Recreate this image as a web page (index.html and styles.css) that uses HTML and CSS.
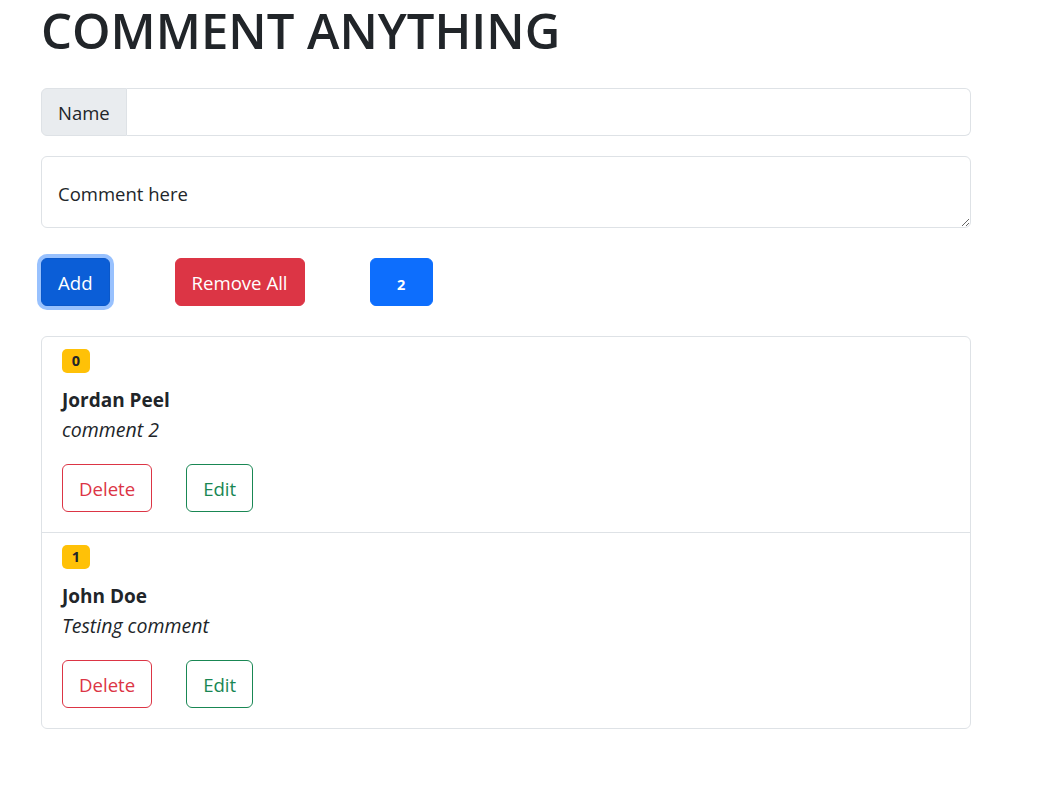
FILE: index.html
```html
<!DOCTYPE html>
<html lang="en">
<head>
<meta charset="utf-8">
<title>Comment Anything</title>
<link rel="stylesheet" href="styles.css">
</head>
<body>
<div class="container">
  <h1 class="title">COMMENT ANYTHING</h1>
  <div class="input-group">
    <span class="input-group-text">Name</span>
    <input class="form-control" type="text">
  </div>
  <textarea class="form-control textarea" placeholder="Comment here"></textarea>
  <div class="actions">
    <button class="btn btn-primary focused">Add</button>
    <button class="btn btn-danger">Remove All</button>
    <button class="btn btn-primary"><span class="badge badge-count">2</span></button>
  </div>
  <ul class="list">
    <li class="item">
      <span class="badge badge-warning">0</span>
      <div class="name">Jordan Peel</div>
      <div class="comment">comment 2</div>
      <div class="item-actions">
        <button class="btn btn-outline-danger">Delete</button>
        <button class="btn btn-outline-success">Edit</button>
      </div>
    </li>
    <li class="item">
      <span class="badge badge-warning">1</span>
      <div class="name">John Doe</div>
      <div class="comment">Testing comment</div>
      <div class="item-actions">
        <button class="btn btn-outline-danger">Delete</button>
        <button class="btn btn-outline-success">Edit</button>
      </div>
    </li>
  </ul>
</div>
</body>
</html>
```

FILE: styles.css
```css
* { box-sizing: border-box; }
body {
  margin: 0;
  font-family: "Open Sans", "Noto Sans", sans-serif;
  color: #212529;
  background: #fff;
}
.container {
  width: 930px;
  margin-left: 41px;
}
.title {
  margin: 0 0 28px 0;
  padding-top: 1px;
  font-size: 49px;
  font-weight: 600;
  line-height: 59px;
  letter-spacing: 0;
}
.input-group {
  display: flex;
  height: 48px;
}
.input-group-text {
  display: flex;
  align-items: center;
  padding: 0 16px;
  font-size: 18.5px;
  background: #e9ecef;
  border: 1px solid #dee2e6;
  border-radius: 6px 0 0 6px;
}
.form-control {
  flex: 1;
  font-family: inherit;
  font-size: 18.5px;
  color: #212529;
  border: 1px solid #dee2e6;
  border-left: 0;
  border-radius: 0 6px 6px 0;
  padding: 0 16px;
  outline: none;
}
.textarea {
  display: block;
  width: 100%;
  height: 72px;
  margin-top: 20px;
  border-left: 1px solid #dee2e6;
  border-radius: 6px;
  padding: 23px 16px 0;
  resize: vertical;
  line-height: 27px;
}
.textarea::placeholder { color: #212529; opacity: 1; }
.actions {
  display: flex;
  gap: 65px;
  margin-top: 30px;
}
.btn {
  height: 48px;
  padding: 0 16px;
  font-family: inherit;
  font-size: 18.6px;
  border-radius: 6px;
  border: 1px solid transparent;
  cursor: pointer;
  color: #fff;
}
.btn-primary { background: #0d6efd; border-color: #0d6efd; }
.btn-primary.focused {
  background: #0b5ed7;
  border-color: #0a58ca;
  box-shadow: 0 0 0 4px rgba(49, 132, 253, 0.5);
}
.btn-danger { background: #dc3545; border-color: #dc3545; }
.btn-outline-danger { background: #fff; color: #dc3545; border-color: #dc3545; }
.btn-outline-success { background: #fff; color: #198754; border-color: #198754; }
.badge {
  display: inline-block;
  font-weight: 700;
  font-size: 14.5px;
  line-height: 1;
  border-radius: 5px;
}
.badge-count {
  padding: 0 10px;
  color: #fff;
  width: 29px;
  text-align: center;
}
.badge-warning {
  background: #ffc107;
  color: #212529;
  padding: 5px 0;
  width: 28px;
  text-align: center;
  height: 24px;
}
.list {
  list-style: none;
  margin: 30px 0 0;
  padding: 0;
  border: 1px solid #dee2e6;
  border-radius: 6px;
}
.item {
  padding: 12px 20px 20px;
  border-top: 1px solid #dee2e6;
}
.item:first-child { border-top: 0; }
.name {
  margin-top: 12px;
  font-size: 19px;
  font-weight: 700;
  line-height: 30px;
}
.comment {
  font-size: 19.5px;
  font-style: italic;
  line-height: 30px;
}
.item-actions {
  display: flex;
  gap: 34px;
  margin-top: 19px;
}
```
